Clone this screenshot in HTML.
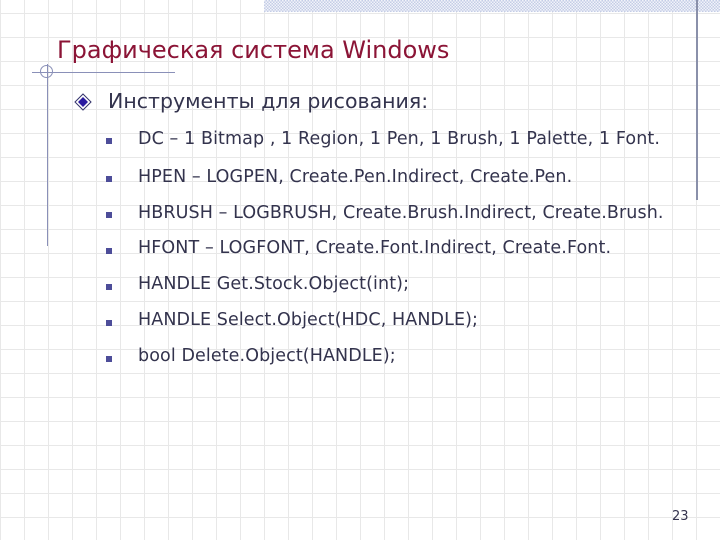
<!DOCTYPE html>
<html><head><meta charset="utf-8"><style>
html,body{margin:0;padding:0}
body{width:720px;height:540px;position:relative;overflow:hidden;background:#fff;font-family:"DejaVu Sans","Liberation Sans",sans-serif}
.grid{position:absolute;inset:0;
background-image:repeating-linear-gradient(90deg,transparent 0 23px,#e8e8e8 23px 24px),repeating-linear-gradient(0deg,transparent 0 23px,#e8e8e8 23px 24px);
background-position:1px 1px}
.band{position:absolute;left:264px;top:0;width:456px;height:12px;
background-color:#e4e8f4;background-image:repeating-conic-gradient(#c4cde6 0 25%,#f2f4fa 0 50%);background-size:3px 3px}
.t{position:absolute;white-space:nowrap}
.b{position:absolute;left:106px;width:6px;height:6px;background:#4d4d99}
.l{position:absolute;left:138px;font-size:17.5px;color:#33334d;white-space:nowrap;letter-spacing:0.1px}
</style></head><body>
<div class="grid"></div>
<div class="band"></div>
<div style="position:absolute;left:696px;top:0;width:2px;height:200px;background:#8a90aa"></div>
<div style="position:absolute;left:47px;top:64px;width:1px;height:182px;background:#8a90b8"></div>
<div style="position:absolute;left:32px;top:72px;width:143px;height:1px;background:#8a90b8"></div>
<div style="position:absolute;left:40px;top:65px;width:13px;height:13px;border:1px solid #8a90b8;border-radius:50%;box-sizing:border-box"></div>
<div class="t" style="left:57px;top:36px;font-size:24px;color:#8b1436">Графическая система Windows</div>
<svg style="position:absolute;left:74px;top:93px" width="18" height="18" viewBox="0 0 18 18"><path d="M9 1L17 9L9 17L1 9Z" fill="#fff" stroke="#33336b" stroke-width="1"/><path d="M9 4L14 9L9 14L4 9Z" fill="#2a1aa0"/></svg>
<div class="t" style="left:108px;top:89px;font-size:20.5px;color:#33334d">Инструменты для рисования:</div>
<div class="b" style="top:138px"></div><div class="l" style="top:129px">DC – 1 Bitmap , 1 Region, 1 Pen, 1 Brush, 1 Palette, 1 Font.</div>
<div class="b" style="top:176px"></div><div class="l" style="top:167px">HPEN – LOGPEN, Create.Pen.Indirect, Create.Pen.</div>
<div class="b" style="top:212px"></div><div class="l" style="top:203px">HBRUSH – LOGBRUSH, Create.Brush.Indirect, Create.Brush.</div>
<div class="b" style="top:248px"></div><div class="l" style="top:238px">HFONT – LOGFONT, Create.Font.Indirect, Create.Font.</div>
<div class="b" style="top:284px"></div><div class="l" style="top:274px">HANDLE Get.Stock.Object(int);</div>
<div class="b" style="top:320px"></div><div class="l" style="top:310px">HANDLE Select.Object(HDC, HANDLE);</div>
<div class="b" style="top:356px"></div><div class="l" style="top:346px">bool Delete.Object(HANDLE);</div>
<div class="t" style="left:672px;top:509px;font-size:13px;color:#33334d">23</div>
</body></html>
